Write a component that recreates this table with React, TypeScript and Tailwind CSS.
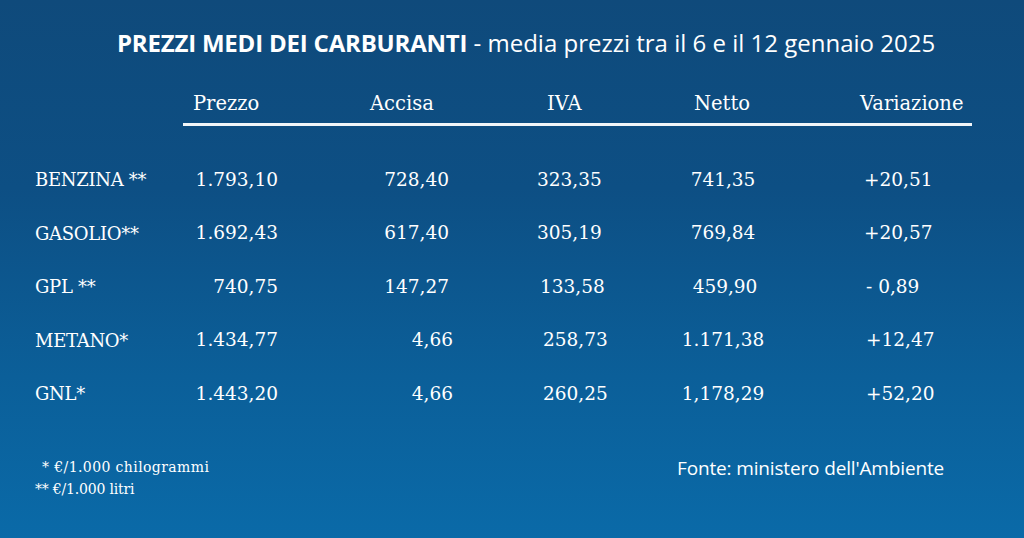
import React from "react";

type Row = {
  label: string;
  prezzo: string;
  accisa: string;
  iva: string;
  netto: string;
  variazione: string;
  accisaCls?: string;
  ivaCls?: string;
  nettoCls?: string;
  varCls?: string;
};

const rows: Row[] = [
  { label: "BENZINA **", prezzo: "1.793,10", accisa: "728,40", iva: "323,35", netto: "741,35", variazione: "+20,51" },
  { label: "GASOLIO**", prezzo: "1.692,43", accisa: "617,40", iva: "305,19", netto: "769,84", variazione: "+20,57" },
  { label: "GPL **", prezzo: "740,75", accisa: "147,27", iva: "133,58", netto: "459,90", variazione: "- 0,89", ivaCls: "pl-[3px]", nettoCls: "pl-[4px]", varCls: "pl-[2px]" },
  { label: "METANO*", prezzo: "1.434,77", accisa: "4,66", iva: "258,73", netto: "1.171,38", variazione: "+12,47", accisaCls: "pr-0", ivaCls: "pl-[6px]", varCls: "pl-[2px]" },
  { label: "GNL*", prezzo: "1.443,20", accisa: "4,66", iva: "260,25", netto: "1,178,29", variazione: "+52,20", accisaCls: "pr-0", ivaCls: "pl-[6px]", varCls: "pl-[2px]" },
];

const serif = "font-['DejaVu_Serif',serif]";
const sans = "font-['Open_Sans','Noto_Sans',sans-serif]";

export default function App() {
  return (
    <div className="w-[1024px] h-[538px] overflow-hidden bg-[linear-gradient(180deg,#0f4a7b_0%,#0d4f84_35%,#0b5f99_70%,#0a6aa8_100%)] text-white flex flex-col">
      {/* Title */}
      <div className={`${sans} pl-[117px] pt-[27px] h-[68px] text-[24px] leading-[32px] whitespace-nowrap`}>
        <span className="font-bold tracking-[-0.2px]">PREZZI MEDI DEI CARBURANTI</span>
        <span> - media prezzi tra il 6 e il 12 gennaio 2025</span>
      </div>

      {/* Header */}
      <div className={`${serif} flex h-[55px] pt-[16px] items-center text-[19.5px] whitespace-nowrap`}>
        <span className="ml-[193px] w-[177px]">Prezzo</span>
        <span className="w-[177px]">Accisa</span>
        <span className="w-[147px]">IVA</span>
        <span className="w-[166px]">Netto</span>
        <span>Variazione</span>
      </div>
      <div className="ml-[183px] w-[789px] h-[3px] bg-white/95" />

      {/* Rows */}
      <div className={`${serif} flex flex-col pt-[27px] text-[18.5px] whitespace-nowrap`}>
        {rows.map((r) => (
          <div key={r.label} className="flex h-[53.5px] items-center pl-[35px]">
            <span className="w-[150px] text-[18px] tracking-[-0.3px]">{r.label}</span>
            <span className="w-[93px] text-right">{r.prezzo}</span>
            <span className={`w-[175px] text-right ${r.accisaCls ?? "pr-[4px]"}`}>{r.accisa}</span>
            <span className={`ml-[84px] w-[100px] ${r.ivaCls ?? ""}`}>{r.iva}</span>
            <span className={`w-[172px] text-center ${r.nettoCls ?? ""}`}>{r.netto}</span>
            <span className={`ml-[55px] ${r.varCls ?? ""}`}>{r.variazione}</span>
          </div>
        ))}
      </div>

      {/* Footer */}
      <div className="flex mt-[35px]">
        <div className={`${serif} pl-[35px] w-[600px] text-[14px] leading-[22px] whitespace-nowrap`}>
          <div className="pl-[7px] tracking-[0.4px]">* €/1.000 chilogrammi</div>
          <div className="tracking-[-0.2px]">** €/1.000 litri</div>
        </div>
        <div className={`${sans} ml-[77px] text-[19px] leading-[24px] tracking-[-0.15px] whitespace-nowrap`}>
          Fonte: ministero dell'Ambiente
        </div>
      </div>
    </div>
  );
}
